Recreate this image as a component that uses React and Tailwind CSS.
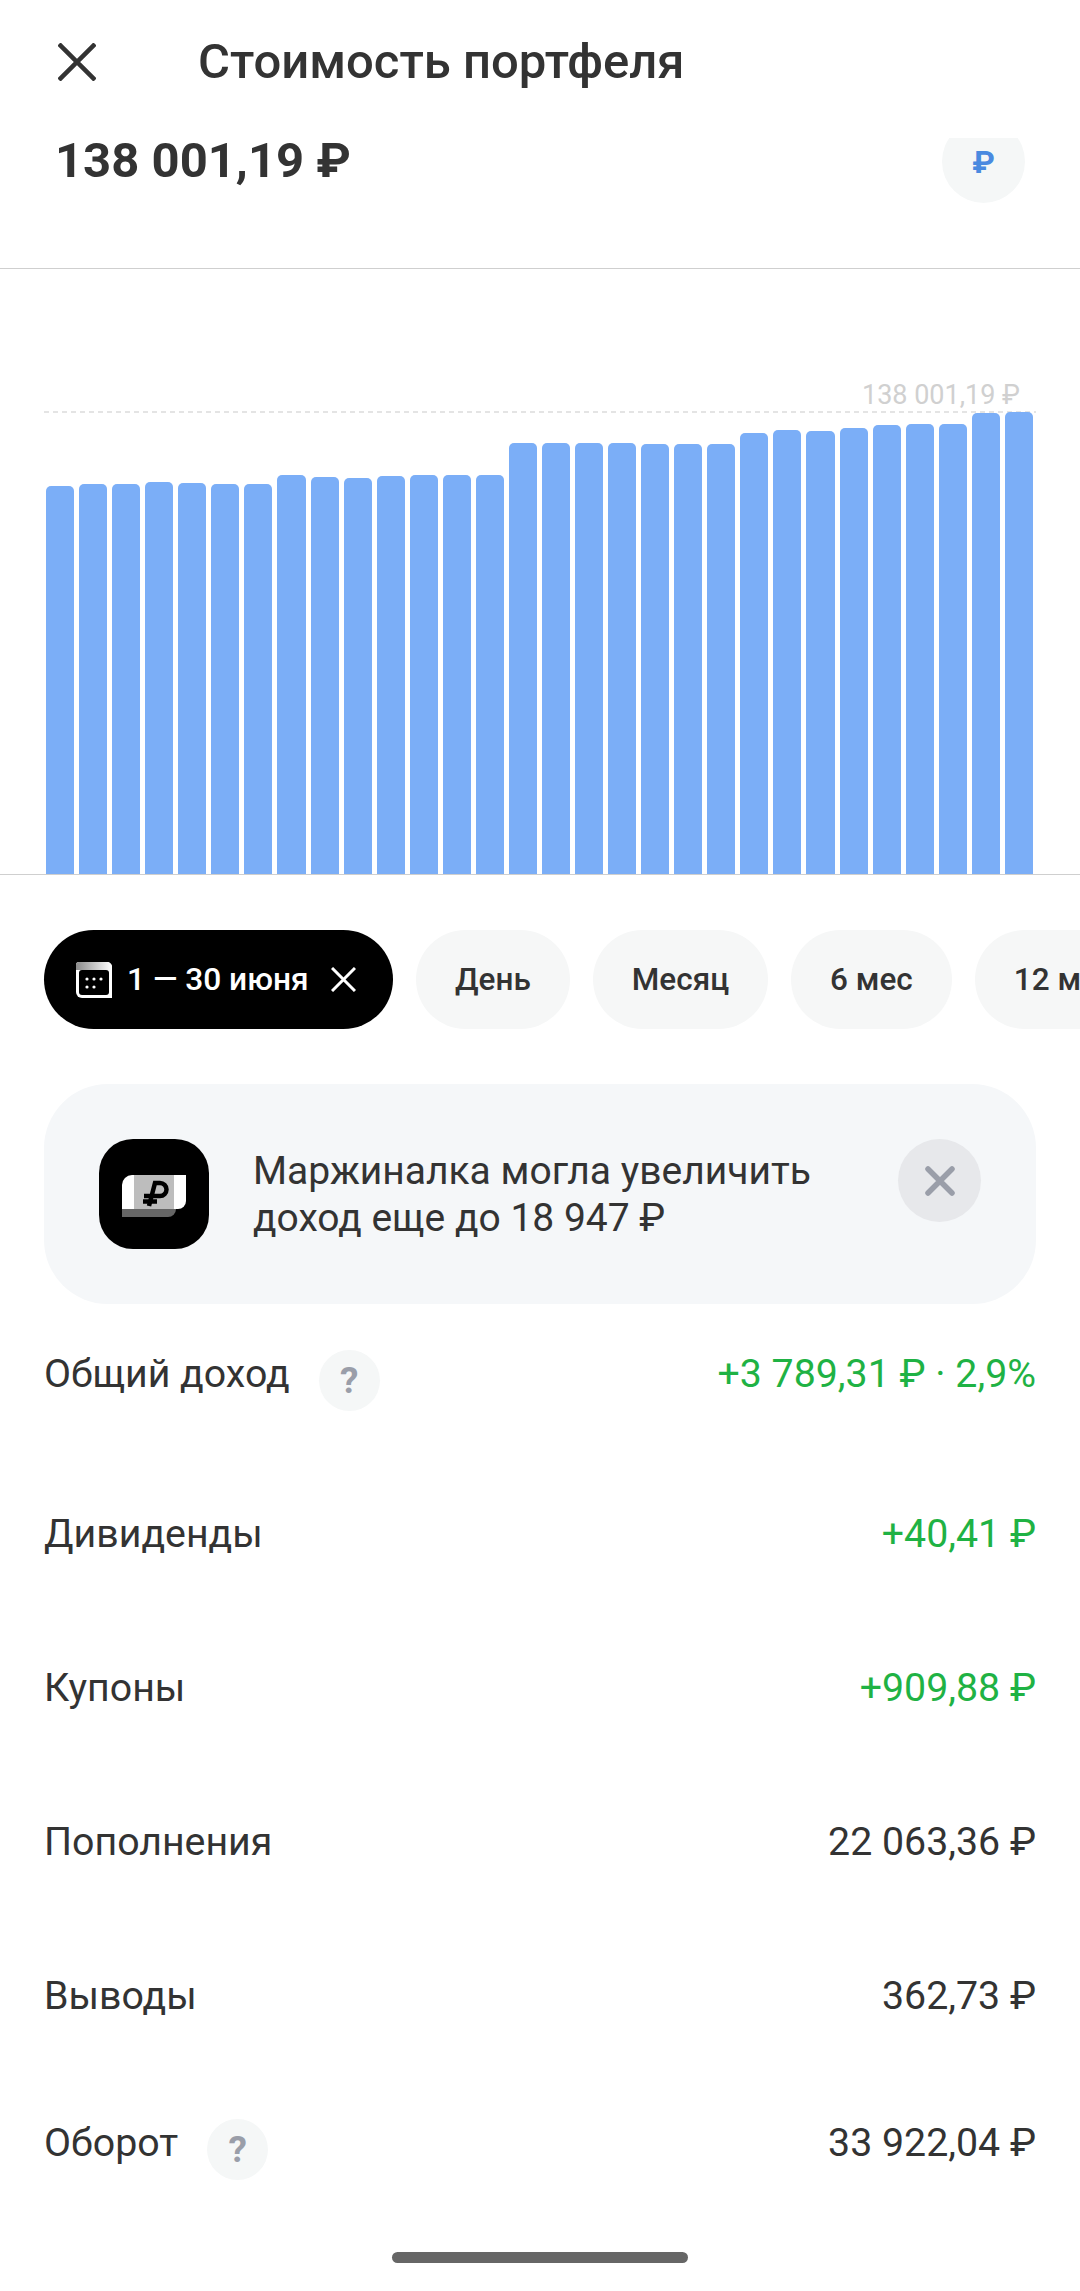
const FONT = "font-['Roboto','Liberation_Sans',sans-serif]";

// top of each bar, px above the baseline
const BARS = [
  388, 390, 390, 392, 391, 390, 390, 399, 397, 396, 398, 399, 399, 399, 431,
  431, 431, 431, 430, 430, 430, 441, 444, 443, 446, 449, 450, 450, 461, 462,
];

const ROWS = [
  { label: "Дивиденды", value: "+40,41 ₽", green: true },
  { label: "Купоны", value: "+909,88 ₽", green: true },
  { label: "Пополнения", value: "22 063,36 ₽" },
  { label: "Выводы", value: "362,73 ₽" },
];

const CHIPS = ["День", "Месяц", "6 мес", "12 мес"];

const Cross = ({ size, stroke, className }) => (
  <svg width={size} height={size} viewBox={`0 0 ${size} ${size}`} fill="none" stroke="currentColor" strokeWidth={stroke} className={className}>
    <path d={`M1 1L${size - 1} ${size - 1}M${size - 1} 1L1 ${size - 1}`} />
  </svg>
);

const CalendarIcon = () => (
  <svg width="36" height="36" viewBox="0 0 36 36" className="shrink-0">
    <defs>
      <linearGradient id="calTop" x1="0" y1="0" x2="1" y2="0">
        <stop offset="0" stopColor="#8a8a8a" />
        <stop offset="1" stopColor="#ffffff" />
      </linearGradient>
    </defs>
    <path d="M3 0H31a5 5 0 0 1 5 5V36H6a6 6 0 0 1-6-6V3a3 3 0 0 1 3-3Z" fill="#fff" />
    <path d="M3 0H31a5 5 0 0 1 5 5V8H0V3a3 3 0 0 1 3-3Z" fill="url(#calTop)" />
    <rect x="3" y="8" width="30" height="25" rx="3" fill="#000" />
    <g fill="#fff">
      <circle cx="11" cy="17" r="1.6" />
      <circle cx="18" cy="17" r="1.6" />
      <circle cx="25" cy="17" r="1.6" />
      <circle cx="11" cy="25" r="1.6" />
      <circle cx="18" cy="25" r="1.6" />
    </g>
  </svg>
);

const MarginIcon = () => (
  <div className="w-[110px] h-[110px] rounded-[34px] bg-black shrink-0">
    <svg width="110" height="110" viewBox="0 0 110 110">
      <path d="M23 62H77V70a8 8 0 0 1-8 8H23Z" fill="#666" />
      <path d="M33 36H87V62a8 8 0 0 1-8 8H23V46a10 10 0 0 1 10-10Z" fill="#fff" />
      <rect x="35" y="36" width="40" height="34" fill="#bdbdbd" />
      <g fill="none" stroke="#000" strokeWidth="4.5">
        <path d="M50 67L56 44H61a6.5 6.5 0 0 1 0 13H45" />
        <path d="M44 62.5H58" />
      </g>
    </svg>
  </div>
);

const Help = () => (
  <div className="ml-[29px] mt-[13px] w-[61px] h-[61px] rounded-full bg-[#f5f7f7] flex items-center justify-center text-[37px] font-bold text-[#9a9ea9]">
    ?
  </div>
);

export default function App() {
  return (
    <div className={`w-[1080px] h-[2291px] overflow-hidden bg-white text-[#333333] ${FONT}`}>
      {/* Header */}
      <div className="h-[138px] flex items-start pt-[43px] pl-[58px]">
        <Cross size={38} stroke={4.5} className="mr-[102px] shrink-0" />
        <h1 className="text-[49px] leading-[38px] font-medium">Стоимость портфеля</h1>
      </div>

      {/* Amount, scrolled under the header */}
      <div className="h-[131px] border-b border-[#cfcfcf] flex items-start justify-between pl-[55px] pr-[55px]">
        <div className="text-[49px] leading-[46px] font-bold">138 001,19 ₽</div>
        <div className="w-[83px] h-[65px] overflow-hidden">
          <div className="w-[83px] h-[83px] rounded-full bg-[#f5f7f7] -mt-[18px] flex items-center justify-center text-[32px] font-bold text-[#4a8ae0]">
            ₽
          </div>
        </div>
      </div>

      {/* Chart */}
      <div className="h-[606px] border-b border-[#cfcfcf] flex flex-col justify-end">
        <div className="text-[27px] leading-[28px] text-[#d0d0d0] self-end mr-[60px] mb-[2px]">138 001,19 ₽</div>
        <div className="mx-[44px] h-[2px] bg-[repeating-linear-gradient(90deg,#e4e4e4_0_5px,transparent_5px_9px)]" />
        <div className="h-[461px] pl-[46px] pr-[47px] flex items-end gap-[5px]">
          {BARS.map((h, i) => (
            <div key={i} className="flex-1 bg-[#7baef7] rounded-t-[5px]" style={{ height: h }} />
          ))}
        </div>
      </div>

      {/* Period chips */}
      <div className="mt-[55px] pl-[44px] flex gap-[23px] whitespace-nowrap">
        <div className="h-[99px] w-[349px] shrink-0 rounded-full bg-black text-white flex items-center pl-[32px] text-[31.7px] font-medium">
          <CalendarIcon />
          <span className="ml-[15px]">1 — 30 июня</span>
          <Cross size={25} stroke={3} className="ml-[22px] shrink-0" />
        </div>
        {CHIPS.map(c => (
          <div key={c} className="h-[99px] shrink-0 rounded-full bg-[#f6f7f7] flex items-center px-[39px] text-[31.5px] font-medium">
            {c}
          </div>
        ))}
      </div>

      {/* Promo card */}
      <div className="mt-[55px] mx-[44px] h-[220px] rounded-[64px] bg-[#f5f7f9] flex items-start pt-[55px] pl-[55px] pr-[55px]">
        <MarginIcon />
        <p className="ml-[44px] flex-1 text-[39px] leading-[47px] pt-[9px]">
          Маржиналка могла увеличить<br />доход еще до 18 947 ₽
        </p>
        <div className="w-[83px] h-[83px] rounded-full bg-[#e7e8eb] flex items-center justify-center shrink-0">
          <svg width="30" height="30" viewBox="0 0 30 30" fill="none" stroke="#9a9ea9" strokeWidth="5.5" strokeLinecap="round">
            <path d="M3 3L27 27M27 3L3 27" />
          </svg>
        </div>
      </div>

      {/* Rows */}
      <div className="mx-[44px] text-[39.3px]">
        <div className="h-[140px] mb-[13px] flex items-center justify-between">
          <div className="flex items-center">
            <span>Общий доход</span>
            <Help />
          </div>
          <span className="text-[#1fb244]">+3 789,31 ₽ · 2,9%</span>
        </div>
        {ROWS.map(r => (
          <div key={r.label} className="h-[154px] flex items-center justify-between">
            <span>{r.label}</span>
            <span className={r.green ? "text-[#1fb244]" : ""}>{r.value}</span>
          </div>
        ))}
        <div className="h-[140px] flex items-center justify-between">
          <div className="flex items-center">
            <span>Оборот</span>
            <Help />
          </div>
          <span>33 922,04 ₽</span>
        </div>
      </div>

      {/* Home indicator */}
      <div className="mt-[39px] mx-auto w-[296px] h-[11px] rounded-full bg-[#666666]" />
    </div>
  );
}
